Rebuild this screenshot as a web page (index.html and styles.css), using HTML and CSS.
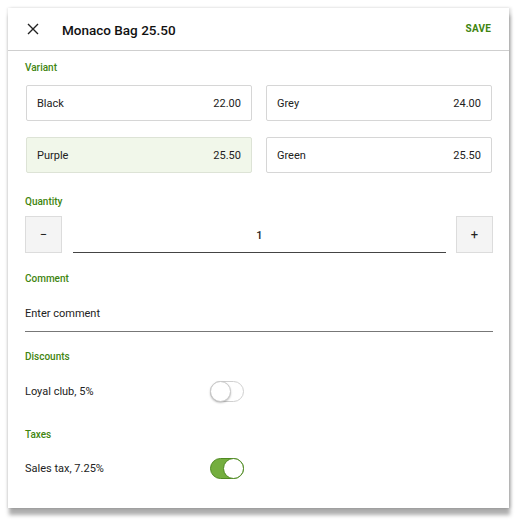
FILE: index.html
```html
<!DOCTYPE html>
<html>
<head>
<meta charset="utf-8">
<link rel="stylesheet" href="styles.css">
</head>
<body>
<div class="card">
  <div class="header">
    <span class="close">
      <svg width="12" height="12" viewBox="0 0 12 12"><path d="M1 1L11 11M11 1L1 11" stroke="#222" stroke-width="1.4" fill="none"/></svg>
    </span>
    <span class="title">Monaco Bag 25.50</span>
    <span class="save">SAVE</span>
  </div>
  <div class="content">
    <div class="label l-variant">Variant</div>
    <div class="variants">
      <div class="variant"><span>Black</span><span>22.00</span></div>
      <div class="variant"><span>Grey</span><span>24.00</span></div>
      <div class="variant selected"><span>Purple</span><span>25.50</span></div>
      <div class="variant"><span>Green</span><span>25.50</span></div>
    </div>
    <div class="label l-qty">Quantity</div>
    <div class="qty">
      <div class="qbtn">−</div>
      <div class="qinput">1</div>
      <div class="qbtn">+</div>
    </div>
    <div class="label l-comment">Comment</div>
    <div class="comment">Enter comment</div>
    <div class="label l-disc">Discounts</div>
    <div class="row r-disc">
      <span>Loyal club, 5%</span>
      <span class="toggle"><span class="knob"></span></span>
    </div>
    <div class="label l-tax">Taxes</div>
    <div class="row r-tax">
      <span>Sales tax, 7.25%</span>
      <span class="toggle on"><span class="knob"></span></span>
    </div>
  </div>
</div>
</body>
</html>
```
FILE: styles.css
```css
html, body { margin: 0; padding: 0; background: #fff; }
body {
  padding: 8px 9px 21px 8px;
  min-height: 529px;
  box-sizing: border-box;
  font-family: Roboto, "Liberation Sans", sans-serif;
  color: #222;
}
.card {
  width: 501px;
  height: 500px;
  background: #fff;
  box-shadow: 1px 7px 4px rgba(0,0,0,0.32), 2px 0 3px rgba(0,0,0,0.14), -1px 0 2px rgba(0,0,0,0.08);
  box-sizing: border-box;
}
.header {
  height: 43px;
  box-sizing: border-box;
  border-bottom: 1px solid #cfcfcf;
  display: flex;
  align-items: center;
  padding: 0 18px 0 19px;
}
.close { width: 12px; height: 12px; display: flex; margin-right: 23px; margin-top: -1px; }
.title { font-size: 13.5px; font-weight: 500; color: #111; flex: 1; margin-top: 1px; }
.save { font-size: 10px; font-weight: 700; color: #3f850f; letter-spacing: 0.2px; margin-top: -1px; }
.content { padding: 0 16px 0 17px; }
.label { font-size: 10px; font-weight: 500; color: #3f850f; line-height: 14px; }
.l-variant { margin-top: 10px; }
.variants {
  margin: 10px 1px 0 1px;
  display: grid;
  grid-template-columns: 1fr 1fr;
  column-gap: 14px;
  row-gap: 16px;
}
.variant {
  height: 36px;
  box-sizing: border-box;
  border: 1px solid #d6d6d6;
  border-radius: 2px;
  display: flex;
  justify-content: space-between;
  align-items: center;
  padding: 1px 10px 0 10px;
  font-size: 11px;
  color: #222;
}
.variant.selected { background: #f1f7ea; border-color: #dde3d6; }
.l-qty { margin-top: 22px; }
.qty { margin-top: 7px; display: flex; align-items: stretch; height: 37px; }
.qbtn {
  width: 37px;
  box-sizing: border-box;
  background: #f4f4f4;
  border: 1px solid #dcdcdc;
  display: flex; align-items: center; justify-content: center;
  font-size: 13px; color: #222;
}
.qinput {
  flex: 1;
  margin: 0 10px 0 11px;
  padding-top: 2px;
  border-bottom: 1px solid #444;
  display: flex; align-items: center; justify-content: center;
  font-size: 11px; font-weight: 500;
}
.l-comment { margin-top: 19px; }
.comment {
  margin-top: 10px;
  height: 36px;
  box-sizing: border-box;
  border-bottom: 1px solid #777;
  display: flex; align-items: center;
  font-size: 11px; color: #222;
}
.l-disc { margin-top: 18px; }
.row { display: grid; grid-template-columns: 185px 34px; align-items: center; font-size: 11px; height: 21px; }
.r-disc { margin-top: 17px; }
.l-tax { margin-top: 26px; }
.r-tax { margin-top: 16px; }
.toggle {
  position: relative;
  width: 34px; height: 21px;
  box-sizing: border-box;
  border: 1px solid #d0d0d0;
  border-radius: 11px;
  background: #fff;
}
.toggle .knob {
  position: absolute;
  left: -1px; top: -1px;
  width: 21px; height: 21px;
  box-sizing: border-box;
  border-radius: 50%;
  background: #fff;
  border: 1px solid #c8c8c8;
  box-shadow: 0 1px 2px rgba(0,0,0,0.25);
}
.toggle.on { background: #74ae3f; border-color: #4f8a22; }
.toggle.on .knob { left: auto; right: -1px; border-color: #4f8a22; box-shadow: none; }
```
